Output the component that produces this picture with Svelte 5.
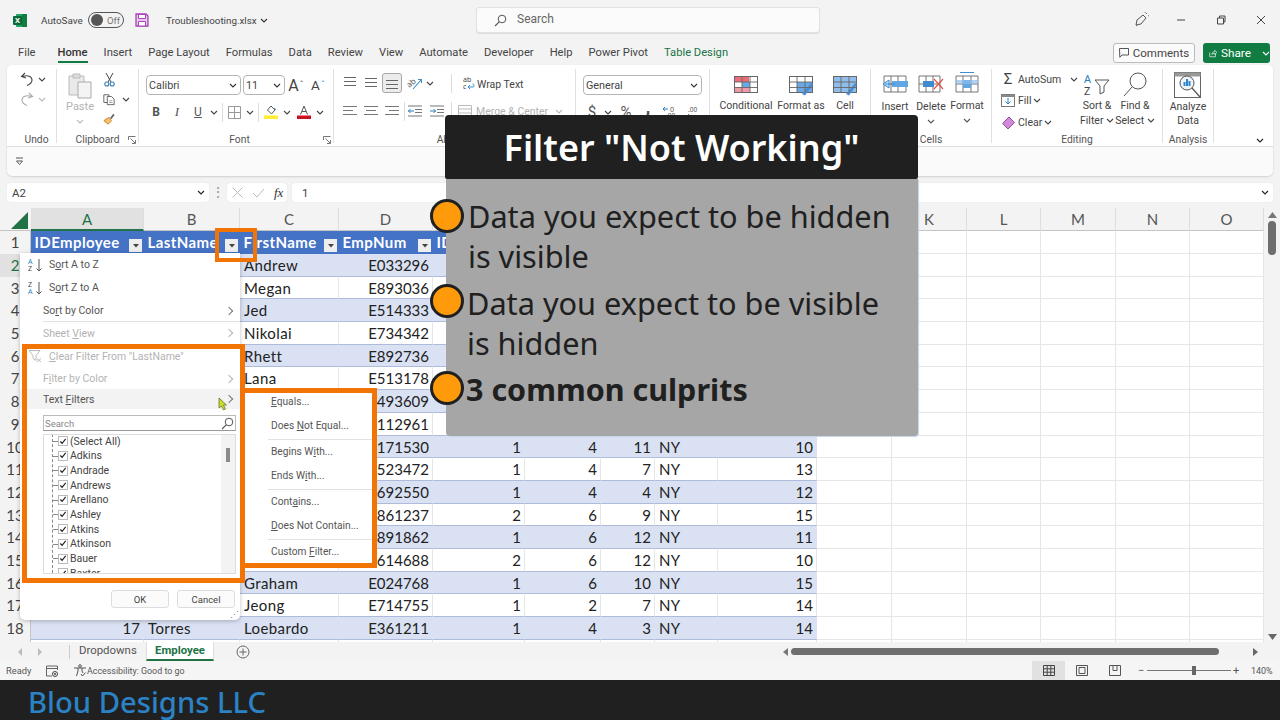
<script>
  const tabs = ['File','Home','Insert','Page Layout','Formulas','Data','Review','View','Automate','Developer','Help','Power Pivot','Table Design'];
  const cols = ['A','B','C','D','E','F','G','H','I','J','K','L','M','N','O'];
  const rows = [
    {c:'Andrew',d:'E033296'},{c:'Megan',d:'E893036'},{c:'Jed',d:'E514333'},{c:'Nikolai',d:'E734342'},
    {c:'Rhett',d:'E892736'},{c:'Lana',d:'E513178'},{c:'',d:'E493609'},{c:'',d:'E112961'},
    {c:'',d:'E171530',v:[1,4,11,10]},{c:'',d:'E523472',v:[1,4,7,13]},{c:'',d:'E692550',v:[1,4,4,12]},
    {c:'',d:'E861237',v:[2,6,9,15]},{c:'',d:'E891862',v:[1,6,12,11]},{c:'',d:'E614688',v:[2,6,12,10]},
    {c:'Graham',d:'E024768',v:[1,6,10,15]},{c:'Jeong',d:'E714755',v:[1,2,7,14]},
    {a:17,b:'Torres',c:'Loebardo',d:'E361211',v:[1,4,3,14]}
  ];
  const heads = ['IDEmployee','LastName','FirstName','EmpNum','ID'];
  const names = ['(Select All)','Adkins','Andrade','Andrews','Arellano','Ashley','Atkins','Atkinson','Bauer','Baxter'];
</script>

{#snippet chev(color = '#444')}
  <svg width="8" height="5" viewBox="0 0 8 5"><path d="M1 1l3 3 3-3" fill="none" stroke={color} stroke-width="1.1"/></svg>
{/snippet}
{#snippet launcher()}
  <svg width="8" height="8" viewBox="0 0 8 8"><path d="M.5 4V.5H7.5M2.5 2.5L7 7M4 7.5h3.5V4" fill="none" stroke="#666" stroke-width=".9"/></svg>
{/snippet}
{#snippet lines(a, b, c, top = 0)}
  <svg width="14" height="12" viewBox="0 0 14 12" style:margin-top="{top}px"><path d="M{a} 1.5H{14-a}M{b} 5.5H{14-b}M{c} 9.5H{14-c}" fill="none" stroke="#666" stroke-width="1.2"/></svg>
{/snippet}
{#snippet hlines(d)}
  <svg width="14" height="12" viewBox="0 0 14 12"><path d={d} fill="none" stroke="#777" stroke-width="1.2"/></svg>
{/snippet}
{#snippet tableIcon(extra)}
  <svg width="26" height="24" viewBox="0 0 26 24">
    <rect x="1.5" y="4.5" width="23" height="16" fill="#fff" stroke="#666"/>
    {@render extra()}
    <path d="M1.5 10h23M1.5 15.5h23M9 4.5v16M17 4.5v16" fill="none" stroke="#666" stroke-width=".9"/>
  </svg>
{/snippet}

<div class="root">
  <header class="title">
    <svg class="xl" width="15" height="15" viewBox="0 0 15 15"><rect x="3" y="1" width="11" height="13" rx="1" fill="#21a366"/><rect x="9" y="1" width="5" height="13" fill="#107c41"/><rect x="0" y="3" width="9" height="9" rx="1" fill="#0b6a38"/><text x="4.5" y="10" font-size="7.5" font-weight="700" fill="#fff" text-anchor="middle" font-family="Noto Sans">X</text></svg>
    <span class="autosave">AutoSave</span>
    <span class="toggle"><i></i><b>Off</b></span>
    <svg class="save" width="14" height="14" viewBox="0 0 14 14"><path d="M1 1h10l2 2v10H1z" fill="#e8c6ee" stroke="#a646b5" stroke-width="1.3"/><path d="M3.5 1.5h7v4h-7zM3.5 8.5h7v4.5h-7z" fill="#fff" stroke="#a646b5"/></svg>
    <span class="fname">Troubleshooting.xlsx</span>
    <span class="fchev">{@render chev('#333')}</span>
    <div class="search">
      <svg width="13" height="13" viewBox="0 0 13 13"><circle cx="8" cy="5" r="3.8" fill="none" stroke="#555"/><path d="M5.2 7.8L1 12" stroke="#555" stroke-width="1.1"/></svg>
      <span>Search</span>
    </div>
    <div class="winbtns">
      <svg class="pen" width="16" height="16" viewBox="0 0 16 16"><path d="M2 13l1-5 6-5 3 3-5 6z" fill="none" stroke="#555"/><path d="M2 14l3-2M12 2l1-1M14 4l1-.5M11 1l.3-1" stroke="#777"/></svg>
      <svg width="10" height="10" viewBox="0 0 10 10"><path d="M1 5h8" stroke="#444" stroke-width="1"/></svg>
      <svg width="10" height="10" viewBox="0 0 10 10"><path d="M1.5 3h6v6h-6zM3.5 3V1h5.5v6H7.5" fill="none" stroke="#444"/></svg>
      <svg width="10" height="10" viewBox="0 0 10 10"><path d="M1 1l8 8M9 1l-8 8" stroke="#444" stroke-width="1"/></svg>
    </div>
  </header>

  <nav class="tabs">
    {#each tabs as t}
      <span class="tab" class:on={t === 'Home'} class:green={t === 'Table Design'}>{t}</span>
    {/each}
    <div class="tabright">
      <button class="comments"><svg width="10" height="10" viewBox="0 0 10 10"><path d="M.5.500h9v6.500H3L.8 9.300z" fill="none" stroke="#444" stroke-width=".9"/></svg>Comments</button>
      <button class="share"><svg width="11" height="11" viewBox="0 0 11 11"><path d="M1 4v6h8V6M4 7c0-3 2-4 4-4V1l3 3-3 3V5C6 5 5 6 4 7z" fill="none" stroke="#fff" stroke-width=".9"/></svg>Share<span class="sc">{@render chev('#fff')}</span></button>
    </div>
  </nav>

  <section class="ribbon">
    <div class="groups">
      <div class="grp g-undo">
        <div class="body">
          <div class="ln h20">
            <span class="s w20"><svg width="14" height="14" viewBox="0 0 14 14"><path d="M5 1L1.500 4.500 6 6M2 4.500c6-2 10 0 10 3.500 0 3-2.500 4.500-5 5.500" fill="none" stroke="#444" stroke-width="1.100"/></svg></span>
            <span class="s w10">{@render chev()}</span>
          </div>
          <div class="ln h20">
            <span class="s w20"><svg width="14" height="14" viewBox="0 0 14 14"><path d="M9 1l3.500 3.500L8 6M12 4.500C6 2.500 2 4.500 2 8c0 3 2.500 4.500 5 5.500" fill="none" stroke="#aaa" stroke-width="1.100"/></svg></span>
            <span class="s w10">{@render chev('#bbb')}</span>
          </div>
        </div>
        <div class="lab">Undo</div>
      </div>

      <div class="grp g-clip">
        <div class="body row">
          <div class="paste">
            <svg width="24" height="27" viewBox="0 0 24 27"><path d="M1 4h15v19H1z" fill="#e9e9e9" stroke="#bbb"/><path d="M5 2h7v4H5z" fill="#ddd" stroke="#bbb"/><path d="M10 10h13v16H10z" fill="#f4f4f4" stroke="#aaa"/></svg>
            <span class="gray">Paste</span>
            <span class="pchev">{@render chev('#bbb')}</span>
          </div>
          <div class="clipcol">
            <span class="s w12 h20"><svg width="11" height="15" viewBox="0 0 11 15"><path d="M2 1l5 9M9 1L4 10" stroke="#444" fill="none"/><circle cx="2.800" cy="12" r="2" fill="none" stroke="#3a7fb8" stroke-width="1.100"/><circle cx="8.200" cy="12" r="2" fill="none" stroke="#3a7fb8" stroke-width="1.100"/></svg></span>
            <span class="ln"><span class="s w12 h20"><svg width="14" height="13" viewBox="0 0 14 13"><path d="M1 1h6v9H1z" fill="#fff" stroke="#555"/><path d="M5 3h5l3 3v6.500H5z" fill="#fff" stroke="#555"/><path d="M7 8h4M7 10h4" stroke="#777" stroke-width=".7"/></svg></span><span class="s w18">{@render chev()}</span></span>
            <span class="s w12 h20"><svg width="14" height="14" viewBox="0 0 14 14"><path d="M8 6l4-5 1.500 1.200L10 7z" fill="#666"/><path d="M1 9l6-4 3 4-4 4z" fill="#f6c16a" stroke="#c77a1f"/></svg></span>
          </div>
        </div>
        <div class="lab">Clipboard<span class="launch">{@render launcher()}</span></div>
      </div>

      <div class="grp g-font">
        <div class="body">
          <div class="ln mt6">
            <div class="combo c-font"><span>Calibri</span>{@render chev('#333')}</div>
            <div class="combo c-size"><span>11</span>{@render chev('#333')}</div>
            <span class="s w22 big">A<sup>ˆ</sup></span>
            <span class="s w22 mid">A<sup class="blue">ˇ</sup></span>
          </div>
          <div class="ln h20 mt7 r2">
            <span class="s w20 ic"><b>B</b></span>
            <span class="s w22 ic"><i>I</i></span>
            <span class="s w20 ic"><u>U</u></span>
            <span class="s w12">{@render chev()}</span>
            <span class="s w4"><i class="sep"></i></span>
            <span class="s w20"><svg width="13" height="13" viewBox="0 0 13 13"><path d="M.5.500h12v12H.5z M6.500.5v12M.5 6.500h12" fill="none" stroke="#999"/></svg></span>
            <span class="s w12">{@render chev()}</span>
            <span class="s w4"><i class="sep"></i></span>
            <span class="s w22"><svg width="14" height="14" viewBox="0 0 14 14"><path d="M7 1l4 4-3.500 4-4-4z" fill="#fff" stroke="#555"/><path d="M10 3.500l2 1" stroke="#3a7fb8"/><rect y="10.500" width="14" height="3.500" fill="#ffee33"/></svg></span>
            <span class="s w10">{@render chev()}</span>
            <span class="s w24"><svg width="14" height="14" viewBox="0 0 14 14"><path d="M3.500 9.500L7 1l3.500 8.500M5 6.500h4" fill="none" stroke="#555"/><rect y="10.500" width="14" height="3.500" fill="#cc1122"/></svg></span>
            <span class="s w8">{@render chev()}</span>
          </div>
        </div>
        <div class="lab">Font<span class="launch">{@render launcher()}</span></div>
      </div>

      <div class="grp g-align">
        <div class="body">
          <div class="ln h20 mt4">
            <span class="s w20">{@render lines(1,1,1,-3)}</span>
            <span class="s w22">{@render lines(1,1,1)}</span>
            <span class="s w20 selbox">{@render lines(1,1,1,3)}</span>
            <span class="s w24"><svg class="orient" width="16" height="15" viewBox="0 0 16 15"><text x="1" y="10" font-size="8" fill="#555" transform="rotate(-40 5 8)" font-family="Noto Sans">ab</text><path d="M7 13L15 4M12 3.500h3.500V7" fill="none" stroke="#3a8fc8" stroke-width="1.100"/></svg></span>
            <span class="s w8">{@render chev()}</span>
            <span class="s w18 end"><i class="sep"></i></span>
            <span class="s w16 ml8"><svg width="13" height="14" viewBox="0 0 13 14"><text x="1" y="6" font-size="7" fill="#444" font-family="Noto Sans">ab</text><text x="1" y="13" font-size="7" fill="#444" font-family="Noto Sans">c</text><path d="M6 11h5c1.500 0 1.500-3-.5-3M6 11l2-2M6 11l2 2" fill="none" stroke="#3a8fc8"/></svg></span>
            <span class="rtext wrap">Wrap Text</span>
          </div>
          <div class="ln h20 mt8">
            <span class="s w20">{@render hlines('M0 1.500H14M0 5.500H10M0 9.500H14')}</span>
            <span class="s w22">{@render hlines('M0 1.500H14M2 5.500H12M0 9.500H14')}</span>
            <span class="s w20">{@render hlines('M0 1.500H14M4 5.500H14M0 9.500H14')}</span>
            <span class="s w4"><i class="sep"></i></span>
            <span class="s w18"><svg width="14" height="12" viewBox="0 0 14 12"><path d="M0 1h14M7 4.500h7M7 7.500h7M0 11h14" stroke="#777"/><path d="M6 6H0M2.500 4L.5 6l2 2" fill="none" stroke="#2b7fc0"/></svg></span>
            <span class="s w26"><svg width="14" height="12" viewBox="0 0 14 12"><path d="M0 1h14M7 4.500h7M7 7.500h7M0 11h14" stroke="#777"/><path d="M0 6h6M3.500 4l2 2-2 2" fill="none" stroke="#2b7fc0"/></svg></span>
            <span class="s w2"><i class="sep"></i></span>
            <span class="s w14 ml6"><svg width="14" height="12" viewBox="0 0 14 12"><path d="M.5.500h13v11H.5zM.5 4h13M.5 8h13" fill="none" stroke="#bbb"/></svg></span>
            <span class="rtext gray">Merge &amp; Center</span>
            <span class="s w22">{@render chev('#bbb')}</span>
          </div>
        </div>
        <div class="lab al">Alignment</div>
      </div>

      <div class="grp g-num">
        <div class="body">
          <div class="ln mt6"><div class="combo c-gen"><span>General</span>{@render chev('#333')}</div></div>
          <div class="ln h20 mt7 numrow">
            <span class="s w18 nb">$</span><span class="s w14">{@render chev()}</span>
            <span class="s w22 nb">%</span><span class="s w22 nb comma">,</span>
            <span class="s w22"><svg width="16" height="14" viewBox="0 0 16 14"><path d="M6 4H1M3 2L1 4l2 2" fill="none" stroke="#2b7fc0"/><text x="8" y="7" font-size="7" fill="#555" font-family="Noto Sans">0</text><text x="4" y="13" font-size="6.500" fill="#555" font-family="Noto Sans">.00</text></svg></span>
            <span class="s w22"><svg width="16" height="14" viewBox="0 0 16 14"><text x="4" y="7" font-size="6.500" fill="#555" font-family="Noto Sans">.00</text><path d="M1 11h5M4 9l2 2-2 2" fill="none" stroke="#2b7fc0"/></svg></span>
          </div>
        </div>
        <div class="lab">Number</div>
      </div>

      <div class="grp g-style">
        <div class="body row">
          <div class="big-btn w72">
            {#snippet cf()}<rect x="2" y="5" width="14" height="5" fill="#ef6b78"/><rect x="9" y="10" width="8" height="5" fill="#6aa8e6"/><rect x="2" y="15" width="15" height="5" fill="#ef9aa4"/>{/snippet}
            {@render tableIcon(cf)}
            <span>Conditional</span>
          </div>
          <div class="big-btn w38">
            {#snippet ft()}<rect x="9" y="10" width="15" height="10" fill="#6aa8e6"/><path d="M14 22l9-11 2 1.500-8 11z" fill="#4a8fd6"/>{/snippet}
            {@render tableIcon(ft)}
            <span>Format as</span>
          </div>
          <div class="big-btn w50">
            {#snippet ce()}<rect x="2" y="5" width="22" height="15" fill="#8fbdec"/><path d="M14 22l9-11 2 1.500-8 11z" fill="#4a8fd6"/>{/snippet}
            {@render tableIcon(ce)}
            <span>Cell</span>
          </div>
        </div>
        <div class="lab">Styles</div>
      </div>

      <div class="grp g-cells">
        <div class="body row">
          <div class="big-btn w48 cellbtn">
            <svg width="28" height="24" viewBox="0 0 28 24"><path d="M3 4h22v16H3zM3 12h22M10 4v16M17 4v16" fill="#fff" stroke="#666" stroke-width=".9"/><rect x="11" y="9" width="16" height="6" fill="#62a6e4"/><path d="M14 12H4M8 8l-6 4 6 4z" fill="#bfe0f8" stroke="#3f8bd0"/></svg>
            <span>Insert</span>
          </div>
          <div class="big-btn w24 cellbtn">
            <svg width="26" height="24" viewBox="0 0 26 24"><path d="M1 4h21v16H1zM1 12h21M8 4v16M15 4v16" fill="#fff" stroke="#666" stroke-width=".9"/><rect x="5" y="9" width="11" height="6" fill="#3f8bd0"/><path d="M16 7l9 10M25 7l-9 10" stroke="#e2574c" stroke-width="1.200"/></svg>
            <span>Delete</span>
            <span class="pchev">{@render chev('#555')}</span>
          </div>
          <div class="big-btn w48 fmtbtn">
            <svg width="26" height="26" viewBox="0 0 26 26"><path d="M6 2.500h14" stroke="#3f8bd0"/><path d="M2 6h22v16H2zM2 14h22M9 6v16M17 6v16" fill="#fff" stroke="#666" stroke-width=".9"/><rect x="9" y="10" width="8" height="8" fill="#62a6e4"/><rect x="2" y="10" width="22" height="4" fill="#8fbdec" opacity=".7"/></svg>
            <span>Format</span>
            <span class="pchev">{@render chev('#555')}</span>
          </div>
        </div>
        <div class="lab">Cells</div>
      </div>

      <div class="grp g-edit">
        <div class="body row">
          <div class="editcol">
            <div class="ln h20"><span class="s w16 sigma">Σ</span><span class="etext">AutoSum</span><span class="s autoch">{@render chev()}</span></div>
            <div class="ln h20 mt1"><span class="s w16"><svg width="14" height="13" viewBox="0 0 14 13"><rect x=".5" y=".5" width="13" height="12" fill="#fff" stroke="#777"/><rect x=".5" y=".5" width="13" height="2.500" fill="#888"/><path d="M7 4v6M4.500 7.500L7 10l2.500-2.500" fill="none" stroke="#2b7fc0"/></svg></span><span class="etext">Fill</span><span class="s w10 ec">{@render chev()}</span></div>
            <div class="ln h20 mt2"><span class="s w16"><svg width="13" height="13" viewBox="0 0 13 13"><path d="M.5 7.500L7 1l5.500 5.500L6 13z" fill="#d08bd6" stroke="#9c4ca6"/></svg></span><span class="etext">Clear</span><span class="s w10 ec">{@render chev()}</span></div>
          </div>
          <div class="big-btn w26 sort">
            <svg width="27" height="26" viewBox="0 0 27 26"><text x="0" y="11" font-size="11" fill="#2b7fc0" font-family="Noto Sans">A</text><text x="0" y="23" font-size="11" fill="#444" font-family="Noto Sans">Z</text><path d="M11 8h14l-5 6v6l-4 2v-8z" fill="#fff" stroke="#555"/></svg>
            <span>Sort &amp;</span><span>Filter <em>{@render chev()}</em></span>
          </div>
          <div class="big-btn w50 sort">
            <svg width="26" height="26" viewBox="0 0 26 26"><circle cx="16" cy="9" r="8" fill="#fff" stroke="#555"/><path d="M10 15L2 24" stroke="#555"/></svg>
            <span>Find &amp;</span><span>Select <em>{@render chev()}</em></span>
          </div>
        </div>
        <div class="lab">Editing</div>
      </div>

      <div class="grp g-an">
        <div class="body">
          <div class="big-btn sort">
            <svg width="28" height="27" viewBox="0 0 28 27"><rect x=".5" y=".5" width="26" height="25" fill="#fff" stroke="#666"/><rect x=".5" y=".5" width="26" height="4" fill="#999"/><circle cx="13" cy="11" r="7" fill="#eef4fa" stroke="#555"/><path d="M9.500 14V10h2v4zM12 14V7h2v7zM14.500 14v-5h2v5z" fill="#2f84cf"/><path d="M18 16l8 9" stroke="#555" stroke-width="1.200"/></svg>
            <span>Analyze</span><span>Data</span>
          </div>
        </div>
        <div class="lab">Analysis</div>
      </div>
      <div class="collapse">{@render chev('#222')}</div>
    </div>
    <div class="qat">
      <svg width="9" height="9" viewBox="0 0 9 9"><path d="M1 1h7M1.500 4h6l-3 3.500z" fill="none" stroke="#555"/></svg>
    </div>
  </section>

  <div class="fbar">
    <div class="namebox"><span>A2</span><span class="nbch">{@render chev('#222')}</span></div>
    <span class="dots">⋮</span>
    <div class="fxbtn">
      <svg width="11" height="11" viewBox="0 0 11 11"><path d="M.5.500l10 10M10.500.500l-10 10" stroke="#bbb"/></svg>
      <svg width="13" height="10" viewBox="0 0 13 10"><path d="M1 5l4 4 7-8" fill="none" stroke="#bbb"/></svg>
      <i>fx</i>
    </div>
    <div class="finput"><span>1</span><span class="finch">{@render chev('#222')}</span></div>
  </div>

  <div class="sheet">
    <div class="gridwrap">
      <div class="colhead">
        <div class="corner"><svg width="18" height="18" viewBox="0 0 18 18"><path d="M17 1v17H0z" fill="#217346"/></svg></div>
        {#each cols as c}<div class="ch" class:sel={c === 'A'}>{c}</div>{/each}
      </div>
      <div class="r tall">
        <div class="rn">1</div>
        {#each heads as h}
          <div class="c hd">{h}<span class="fb"><svg width="6" height="4" viewBox="0 0 6 4"><path d="M0 0h6L3 3.500z" fill="#444"/></svg></span></div>
        {/each}
        {#each [0,1,2,3] as i}<div class="c hd"></div>{/each}
        {#each [0,1,2,3,4,5] as i}<div class="c"></div>{/each}
      </div>
      {#each rows as row, i}
        <div class="r" class:band={i % 2 === 0}>
          <div class="rn" class:rsel={i === 0}>{i + 2}</div>
          <div class="c t num">{row.a ?? ''}</div>
          <div class="c t txt">{row.b ?? ''}</div>
          <div class="c t txt">{row.c}</div>
          <div class="c t num">{row.d}</div>
          <div class="c t num">{row.v ? row.v[0] : ''}</div>
          <div class="c t num">{row.v ? row.v[1] : ''}</div>
          <div class="c t num">{row.v ? row.v[2] : ''}</div>
          <div class="c t txt">{row.v ? 'NY' : ''}</div>
          <div class="c t num">{row.v ? row.v[3] : ''}</div>
          {#each [0,1,2,3,4,5] as j}<div class="c"></div>{/each}
        </div>
      {/each}
      <div class="r"><div class="rn"></div>{#each cols as c}<div class="c"></div>{/each}</div>
    </div>
    <div class="vscroll">
      <svg width="9" height="6" viewBox="0 0 9 6"><path d="M4.500 0L9 6H0z" fill="#777"/></svg>
      <i></i>
      <svg class="dn" width="9" height="6" viewBox="0 0 9 6"><path d="M4.500 6L9 0H0z" fill="#666"/></svg>
    </div>
  </div>

  <div class="sheettabs">
    <span class="arrows">
      <svg width="5" height="8" viewBox="0 0 5 8"><path d="M4 0L0 4l4 4z" fill="#bbb"/></svg>
      <svg width="5" height="8" viewBox="0 0 5 8"><path d="M1 0l4 4-4 4z" fill="#bbb"/></svg>
    </span>
    <i class="tsep"></i>
    <span class="st">Dropdowns</span>
    <span class="st active">Employee</span>
    <svg class="plus" width="14" height="14" viewBox="0 0 14 14"><circle cx="7" cy="7" r="6" fill="none" stroke="#666"/><path d="M7 3.500v7M3.500 7h7" stroke="#666"/></svg>
    <div class="hscroll">
      <svg width="5" height="8" viewBox="0 0 5 8"><path d="M5 0L0 4l5 4z" fill="#777"/></svg>
      <i></i>
      <svg class="hr" width="5" height="8" viewBox="0 0 5 8"><path d="M0 0l5 4-5 4z" fill="#666"/></svg>
    </div>
  </div>

  <footer class="status">
    <span class="ready">Ready</span>
    <svg class="mac" width="12" height="12" viewBox="0 0 12 12"><path d="M.5 1h11v4M.5 1v10H6M.5 3.500H11" fill="none" stroke="#666"/><circle cx="9" cy="9" r="2.500" fill="none" stroke="#444"/><circle cx="9" cy="9" r="1" fill="#444"/></svg>
    <svg class="acc" width="14" height="13" viewBox="0 0 14 13"><circle cx="7" cy="2" r="1.300" fill="none" stroke="#555"/><path d="M1 4h12M5 4v3l-1.500 5M9 4v3l1 2" fill="none" stroke="#555"/><path d="M8 10l1.500 2 3-3.500" fill="none" stroke="#555"/></svg>
    <span class="acct">Accessibility: Good to go</span>
    <div class="stright">
      <span class="vb on"><svg width="12" height="11" viewBox="0 0 12 11"><path d="M.5.500h11v10H.5zM.5 3.800h11M.5 7.200h11M4.200.5v10M7.800.5v10" fill="none" stroke="#444"/></svg></span>
      <span class="vb"><svg width="12" height="11" viewBox="0 0 12 11"><path d="M.5.500h11v10H.5z" fill="none" stroke="#555"/><path d="M3 2.500h6v6H3z" fill="none" stroke="#555"/></svg></span>
      <span class="vb"><svg width="12" height="11" viewBox="0 0 12 11"><path d="M.5.500h11v10H.5zM4 .5v5h4v-5" fill="none" stroke="#555"/></svg></span>
      <span class="zm">−</span>
      <span class="slider"><i></i></span>
      <span class="zp">+</span>
      <span class="pct">140%</span>
    </div>
  </footer>

  <div class="brand"><span>Blou Designs LLC</span></div>

  <!-- overlays -->
  <div class="menu">
    <div class="mi h23"><span class="sorti"><svg width="16" height="14" viewBox="0 0 16 14"><text x="0" y="6" font-size="7" fill="#2b7fc0" font-family="Noto Sans">A</text><text x="0" y="13" font-size="7" fill="#444" font-family="Noto Sans">Z</text><path d="M11 1v12M8.500 10.500L11 13l2.500-2.500" fill="none" stroke="#555"/></svg></span><span class="lbl ic1">S<u>o</u>rt A to Z</span></div>
    <div class="mi h23"><span class="sorti"><svg width="16" height="14" viewBox="0 0 16 14"><text x="0" y="6" font-size="7" fill="#444" font-family="Noto Sans">Z</text><text x="0" y="13" font-size="7" fill="#2b7fc0" font-family="Noto Sans">A</text><path d="M11 1v12M8.500 10.500L11 13l2.500-2.500" fill="none" stroke="#555"/></svg></span><span class="lbl ic1">S<u>o</u>rt Z to A</span></div>
    <div class="mi h23 ul"><span class="lbl">So<u>r</u>t by Color</span><span class="ar"></span></div>
    <div class="mi h22 gr"><span class="lbl">Sheet <u>V</u>iew</span><span class="ar"></span></div>
    <div class="mi h24 gr"><span class="sorti"><svg width="14" height="13" viewBox="0 0 14 13"><path d="M1 1h11L8 6v5L5 9V6z" fill="none" stroke="#bbb"/><path d="M9 9l4 3.500M13 9l-4 3.500" stroke="#bbb"/></svg></span><span class="lbl ic1"><u>C</u>lear Filter From "LastName"</span></div>
    <div class="mi h21 gr"><span class="lbl">F<u>i</u>lter by Color</span><span class="ar"></span></div>
    <div class="mi h20 hov"><span class="lbl">Text <u>F</u>ilters</span><span class="ar"></span></div>
    <div class="msearch"><span>Search</span><svg width="13" height="13" viewBox="0 0 13 13"><circle cx="8" cy="5" r="3.800" fill="none" stroke="#555"/><path d="M5.200 7.800L1 12" stroke="#555" stroke-width="1.100"/></svg></div>
    <div class="mlist">
      <div class="tree">
        {#each names as n}
          <div class="chk"><span class="box"><svg width="9" height="9" viewBox="0 0 9 9"><path d="M1.500 4.500l2 2 4-5" fill="none" stroke="#222" stroke-width="1.300"/></svg></span>{n}</div>
        {/each}
      </div>
      <div class="mscroll"><i></i></div>
    </div>
    <div class="mbtns"><button>OK</button><button>Cancel</button></div>
    <div class="grip">⋰</div>
  </div>

  <div class="submenu">
    <div class="si"><u>E</u>quals...</div>
    <div class="si ul">Does <u>N</u>ot Equal...</div>
    <div class="si">Begins W<u>i</u>th...</div>
    <div class="si ul">Ends W<u>i</u>th...</div>
    <div class="si">Cont<u>a</u>ins...</div>
    <div class="si ul"><u>D</u>oes Not Contain...</div>
    <div class="si">Custom <u>F</u>ilter...</div>
  </div>

  <div class="hl hl-btn"></div>
  <div class="hl hl-menu"></div>
  <div class="hl hl-sub"></div>
  <svg class="cursor" width="9" height="14" viewBox="0 0 9 14"><path d="M1 1v10l2.500-2 2 4 2-1-2-4H8.500z" fill="#c7df2a" stroke="#56641a" stroke-width=".7"/></svg>

  <aside class="panel">
    <h1>Filter "Not Working"</h1>
    <div class="pbody">
      <div class="pi"><i class="dot"></i><p>Data you expect to be hidden<br/>is visible</p></div>
      <div class="pi"><i class="dot"></i><p>Data you expect to be visible<br/>is hidden</p></div>
      <div class="pi"><i class="dot"></i><p class="bold">3 common culprits</p></div>
    </div>
  </aside>
</div>

<style>
  :global(body) { margin: 0; background: #f3f3f3; }
  .root { position: relative; width: 1280px; height: 720px; overflow: hidden; background: #f3f3f3; color: #444; font-family: "Roboto", "Noto Sans", sans-serif; font-size: 11px; display: flex; flex-direction: column; }
  button { font-family: inherit; }

  .title { height: 40px; display: flex; align-items: center; flex: none; }
  .xl { margin-left: 13px; flex: none; }
  .autosave { margin-left: 13px; font-size: 9.900px; color: #444; width: 47px; flex: none; white-space: nowrap; }
  .toggle { width: 36px; height: 16px; box-sizing: border-box; border: 1px solid #555; border-radius: 9px; display: flex; align-items: center; padding-left: 2px; flex: none; }
  .toggle i { width: 12px; height: 12px; background: #555; border-radius: 50%; flex: none; }
  .toggle b { font-weight: 400; font-size: 9.500px; margin-left: 4px; color: #777; }
  .save { margin-left: 11px; flex: none; }
  .fname { margin-left: 17px; font-size: 9.800px; width: 94px; white-space: nowrap; flex: none; }
  .fchev { display: flex; flex: none; }
  .search { margin-left: 208px; width: 344px; height: 26px; box-sizing: border-box; background: #fbfbfb; border: 1px solid #e2e2e2; border-radius: 3px; box-shadow: 0 1px 1px #ddd; display: flex; align-items: center; padding-left: 17px; gap: 10px; font-size: 12px; color: #666; flex: none; }
  .search span { margin-top: -2px; }
  .winbtns { margin-left: 314px; display: flex; align-items: center; gap: 30px; flex: none; }
  .pen { margin-right: -4px; }

  .tabs { height: 25px; flex: none; display: flex; align-items: center; padding-left: 18px; gap: 16px; font-size: 11.200px; position: relative; }
  .tab { height: 25px; line-height: 25px; white-space: nowrap; position: relative; }
  .tab.on { font-weight: 500; color: #333; margin-left: 6px; }
  .tab.on::after { content: ''; position: absolute; left: 0; right: 0; bottom: 2px; height: 2px; background: #107c41; }
  .tab.green { color: #217346; }
  .tabright { position: absolute; left: 1113px; top: 3px; display: flex; gap: 8px; }
  .comments { width: 82px; height: 20px; background: #fbfbfb; border: 1px solid #bbb; border-radius: 3px; display: flex; align-items: center; justify-content: center; gap: 4px; font-size: 11.500px; color: #444; padding: 0; }
  .share { width: 67px; height: 20px; background: #107c41; border: 0; border-radius: 3px; color: #fff; display: flex; align-items: center; justify-content: flex-start; padding: 0 0 0 6px; gap: 4px; font-size: 11.800px; }
  .sc { margin-left: 7px; display: flex; }

  .ribbon { flex: none; margin: 0 7px; height: 111px; background: #fdfdfd; border-radius: 6px; box-shadow: 0 1px 2px #cfcfcf; display: flex; flex-direction: column; }
  .groups { height: 82px; border-bottom: 1px solid #dedede; box-sizing: border-box; display: flex; padding-top: 4px; position: relative; background: #fff; border-radius: 6px 6px 0 0; }
  .qat { flex: 1; background: #fafafa; display: flex; align-items: center; padding-left: 8px; border-radius: 0 0 6px 6px; }
  .grp { height: 74px; border-right: 1px solid #e1e1e1; box-sizing: border-box; display: flex; flex-direction: column; position: relative; flex: none; }
  .body { height: 64px; flex: none; }
  .body.row { display: flex; }
  .lab { height: 14px; line-height: 14px; text-align: center; font-size: 10.300px; color: #555; margin-top: 0; position: relative; white-space: nowrap; flex: none; }
  .launch { position: absolute; right: 2px; top: 3px; display: flex; }

  .ln { display: flex; align-items: center; }
  .h20 { height: 20px; }
  .mt1 { margin-top: 1px; } .mt2 { margin-top: 2px; } .mt4 { margin-top: 4px; } .mt6 { margin-top: 6px; } .mt7 { margin-top: 7px; } .mt8 { margin-top: 8px; }
  .ml6 { margin-left: 6px; } .ml8 { margin-left: 8px; }
  .s { display: flex; align-items: center; justify-content: center; flex: none; }
  .w2 { width: 2px; } .w4 { width: 4px; } .w8 { width: 8px; } .w10 { width: 10px; } .w12 { width: 12px; } .w14 { width: 14px; } .w16 { width: 16px; } .w18 { width: 18px; } .w20 { width: 20px; } .w22 { width: 22px; } .w24 { width: 24px; } .w26 { width: 26px; } .w38 { width: 38px; } .w48 { width: 48px; } .w50 { width: 50px; } .w72 { width: 72px; }
  .sep { display: block; width: 1px; height: 19px; background: #ddd; flex: none; }
  .end { justify-content: flex-end; }
  .gray { color: #b3b3b3; }

  .g-undo { width: 50px; padding-left: 10px; }
  .g-clip { width: 82px; }
  .paste { width: 46px; display: flex; flex-direction: column; align-items: center; padding-top: 3px; font-size: 11px; line-height: 15px; box-sizing: border-box; }
  .pchev { display: flex; justify-content: center; margin-top: 5px; }
  .clipcol { display: flex; flex-direction: column; }
  .clipcol .w18 { margin-left: 4px; width: 14px; }
  .g-font { width: 195px; padding-left: 7px; }
  .combo { height: 20px; box-sizing: border-box; border: 1px solid #b5b5b5; border-radius: 4px; background: #fff; display: flex; align-items: center; justify-content: space-between; padding: 0 3px 0 2px; font-size: 10.800px; color: #444; flex: none; }
  .c-font { width: 95px; }
  .c-size { width: 42px; margin-left: 2px; }
  .big { font-size: 16px; }
  .mid { font-size: 13.500px; }
  .big sup, .mid sup { font-size: 9px; line-height: 0; margin-left: 1px; }
  .blue { color: #2b7fc0; }
  .ic { font-size: 12px; color: #555; }
  .ic i { font-family: "Liberation Serif", serif; font-size: 13px; }
  .g-align { width: 242px; padding-left: 6px; }
  .selbox { height: 20px; box-sizing: border-box; background: #ececec; border: 1px solid #a8a8a8; border-radius: 3px; }
  .rtext { font-size: 10.500px; white-space: nowrap; margin-left: 1px; }
  .wrap { margin-top: 3px; }
  .rtext.gray { width: 72px; margin-left: 4px; }
  .orient { overflow: visible; }
  .al { padding-left: 5px; }
  .g-num { width: 134px; padding-left: 7px; }
  .c-gen { width: 119px; }
  .nb { font-size: 15px; color: #555; }
  .comma { font-weight: 700; font-size: 20px; margin-top: -12px; }
  .g-style { width: 161px; }
  .big-btn { display: flex; flex-direction: column; align-items: center; flex: none; font-size: 10.500px; line-height: 14px; white-space: nowrap; padding-top: 3px; box-sizing: border-box; }
  .big-btn svg { margin-bottom: 3px; }
  .big-btn span { line-height: 14px; }
  .g-cells { width: 121px; }
  .cellbtn svg { margin-bottom: 4px; }
  .fmtbtn { padding-top: 1px; }
  .g-edit { width: 171px; }
  .editcol { width: 92px; padding-left: 8px; box-sizing: border-box; display: flex; flex-direction: column; }
  .sigma { font-size: 15px; color: #444; }
  .etext { font-size: 10.500px; margin-left: 2px; white-space: nowrap; }
  .autoch { margin-left: 9px; }
  .ec { margin-left: 1px; }
  .sort { padding-top: 3px; }
  .sort svg { margin-bottom: 1px; }
  .sort em { font-style: normal; display: inline-block; vertical-align: 1px; }
  .sort em :global(svg) { display: inline-block; margin: 0; }
  .g-an { width: 51px; }
  .collapse { position: absolute; left: 1249px; top: 68px; }

  .fbar { flex: none; margin-top: 7px; height: 19px; display: flex; padding: 0 7px; align-items: stretch; font-size: 11.500px; }
  .namebox { width: 202px; background: #fff; border-radius: 3px; box-shadow: 0 0 1px #ccc; display: flex; align-items: center; justify-content: space-between; padding: 0 4px 0 5px; box-sizing: border-box; }
  .nbch { display: flex; }
  .dots { width: 18px; text-align: center; line-height: 19px; color: #888; }
  .fxbtn { width: 60px; background: #fff; border-radius: 3px; box-shadow: 0 0 1px #ccc; display: flex; align-items: center; gap: 9px; padding-left: 5px; box-sizing: border-box; font-family: "Liberation Serif", serif; font-size: 13px; color: #333; }
  .finput { flex: 1; margin-left: 5px; background: #fff; border-radius: 3px; box-shadow: 0 0 1px #ccc; display: flex; align-items: center; justify-content: space-between; padding: 0 4px 0 10px; }
  .finch { display: flex; }

  .sheet { flex: none; margin-top: 6px; height: 434px; display: flex; overflow: hidden; }
  .gridwrap { width: 1264px; flex: none; }
  .colhead, .r { display: grid; grid-template-columns: 31px 113px 96px 99px 94px 92px 76px 54px 63px 99px 75px 75px 74px 75px 74px 74px; }
  .colhead { height: 23px; border-bottom: 1px solid #c4c4c4; box-sizing: border-box; }
  .corner { display: flex; align-items: flex-end; justify-content: flex-end; padding: 0 2px 2px 0; }
  .ch { font-family: "Lato", sans-serif; font-size: 15px; line-height: 22px; text-align: center; color: #555; border-right: 1px solid #ddd; box-sizing: border-box; }
  .ch.sel { background: #e1e1e1; color: #217346; border-bottom: 2px solid #217346; height: 23px; }
  .r { height: 22.690px; }
  .r.tall { height: 23px; }
  .rn { font-family: "Lato", sans-serif; font-size: 15px; text-align: center; line-height: 22px; color: #444; border-right: 1px solid #c4c4c4; box-sizing: border-box; background: #f3f3f3; }
  .rn.rsel { background: #e1e1e1; color: #217346; }
  .c { background: #fff; border-right: 1px solid #e6e6e6; border-bottom: 1px solid #e6e6e6; box-sizing: border-box; font-family: "Lato", sans-serif; font-size: 15px; line-height: 22px; color: #222; padding: 0 3px 0 4px; white-space: nowrap; overflow: hidden; position: relative; min-width: 0; }
  .txt { letter-spacing: .4px; }
  .num { text-align: right; }
  .hd { background: #4472c4; border: 0; color: #fff; font-weight: 700; line-height: 22px; letter-spacing: .4px; padding-left: 3.500px; }
  .fb { position: absolute; right: 2px; top: 8px; width: 13px; height: 13px; background: #eee; display: flex; align-items: center; justify-content: center; }
  .band .c { background: #d9e1f2; border-right-color: transparent; border-bottom-color: #aebcdc; }
  .r:not(.band) .c.t { border-bottom-color: #aebcdc; }
  .band .c:nth-child(n+11), .r:not(.band) .c:nth-child(n+11) { background: #fff; border-right-color: #e6e6e6; border-bottom-color: #e6e6e6; }
  .vscroll { flex: 1; display: flex; flex-direction: column; align-items: center; padding-top: 4px; }
  .vscroll i { width: 8px; height: 34px; background: #6e6e6e; border-radius: 4px; margin-top: 3px; }
  .dn { margin-top: auto; margin-bottom: 2px; }

  .sheettabs { flex: none; height: 19px; display: flex; align-items: stretch; font-size: 11.400px; }
  .arrows { width: 69px; display: flex; align-items: center; gap: 14px; padding-left: 18px; box-sizing: border-box; }
  .tsep { width: 1px; height: 14px; background: #ccc; align-self: center; }
  .st { line-height: 17px; margin-left: 9px; color: #555; white-space: nowrap; width: 58px; }
  .active { margin-left: 9px; width: 68px; box-sizing: border-box; text-align: center; background: #fff; color: #217346; font-weight: 700; border-bottom: 2px solid #217346; border-left: 1px solid #ddd; border-right: 1px solid #ddd; }
  .plus { align-self: center; margin-left: 22px; }
  .hscroll { margin-left: 533px; width: 478px; display: flex; align-items: center; }
  .hscroll i { width: 428px; height: 7px; border-radius: 4px; background: #6e6e6e; margin-left: 3px; }
  .hr { margin-left: 34px; }

  .status { flex: none; height: 19px; display: flex; align-items: center; padding-left: 6px; font-size: 8.900px; color: #555; background: #f5f5f5; }
  .ready { width: 25px; font-size: 9.300px; }
  .mac { margin-left: 15px; flex: none; }
  .acc { margin-left: 15px; flex: none; }
  .acct { margin-left: 0; }
  .stright { position: absolute; left: 1032px; top: 661px; height: 19px; display: flex; align-items: center; }
  .vb { width: 33.300px; height: 19px; display: flex; align-items: center; justify-content: center; flex: none; }
  .vb.on { background: #e1e1e1; }
  .zm { margin-left: 6px; width: 8px; font-size: 11px; flex: none; }
  .slider { width: 84px; height: 1px; background: #777; position: relative; margin-left: 1px; flex: none; }
  .slider i { position: absolute; left: 45px; top: -4px; width: 4px; height: 9px; background: #666; }
  .zp { margin-left: 2px; width: 9px; font-size: 11px; flex: none; }
  .pct { margin-left: 9px; font-size: 9px; flex: none; white-space: nowrap; }

  .brand { flex: 1; background: #202020; box-sizing: border-box; padding: 5px 0 0 28px; color: #2b82c5; font-family: "Noto Sans", sans-serif; font-size: 29.200px; font-weight: 500; line-height: 35px; }

  .menu { position: absolute; left: 20px; top: 253px; width: 220px; height: 367px; background: #fff; border-radius: 0 0 5px 5px; box-shadow: 0 1px 4px rgba(0,0,0,.25); font-size: 10.500px; color: #555; }
  .mi { display: flex; align-items: center; position: relative; padding-left: 23px; box-sizing: border-box; }
  .h21 { height: 21px; } .h22 { height: 22px; } .h23 { height: 23px; } .h24 { height: 24px; }
  .ul::after { content: ''; position: absolute; left: 23px; right: 0; bottom: 0; height: 1px; background: #e2e2e2; }
  .mi.gr { color: #b3b3b3; }
  .mi.gr .ar { border-color: #b3b3b3; }
  .hov { background: #f3f3f3; }
  .ar { position: absolute; right: 8px; top: 50%; width: 5px; height: 5px; border-top: 1px solid #777; border-right: 1px solid #777; transform: translateY(-50%) rotate(45deg); }
  .sorti { position: absolute; left: 8px; top: 50%; transform: translateY(-50%); display: flex; }
  .ic1 { margin-left: 6px; }
  .msearch { margin: 6px 4px 0 23px; height: 16px; box-sizing: border-box; border: 1px solid #bbb; border-bottom-color: #999; display: flex; align-items: center; justify-content: space-between; padding: 0 1px; color: #888; font-size: 9.500px; }
  .mlist { margin: 3px 4px 0 23px; height: 140px; box-sizing: border-box; border: 1px solid #ddd; display: flex; overflow: hidden; }
  .tree { flex: 1; margin: -1px 0 0 8px; border-left: 1px dashed #888; font-size: 10.500px; color: #444; }
  .chk { height: 14.670px; display: flex; align-items: center; position: relative; padding-left: 5px; white-space: nowrap; }
  .chk::before { content: ''; position: absolute; left: 0; top: 7px; width: 5px; border-top: 1px dashed #888; }
  .box { width: 10px; height: 10px; box-sizing: border-box; border: 1px solid #bbb; background: #fff; display: flex; align-items: center; justify-content: center; margin-right: 2px; flex: none; }
  .mscroll { width: 14px; background: #f3f3f3; display: flex; justify-content: center; padding-top: 13px; box-sizing: border-box; }
  .mscroll i { width: 4px; height: 14px; background: #8a8a8a; }
  .mbtns { display: flex; gap: 8px; margin: 16px 5px 0 0; justify-content: flex-end; }
  .mbtns button { width: 58px; height: 18px; border: 1px solid #ddd; border-radius: 3px; background: #fbfbfb; font-size: 9.500px; color: #444; padding: 0; }
  .grip { position: absolute; right: 1px; bottom: 0; font-size: 9px; color: #777; line-height: 10px; }

  .submenu { position: absolute; left: 245px; top: 388px; width: 132px; height: 180px; background: #fff; box-sizing: border-box; padding: 2px 0 0 26px; font-size: 10.200px; color: #555; }
  .si { height: 25px; line-height: 24px; white-space: nowrap; position: relative; box-sizing: border-box; }
  .si.ul::after { left: -3px; right: 5px; bottom: 0; content: ''; position: absolute; height: 1px; background: #e2e2e2; }
  .si:nth-child(1) { height: 24px; } .si:nth-child(3) { height: 24px; } .si:nth-child(5) { height: 24px; }
  .si:nth-child(2), .si:nth-child(4), .si:nth-child(6) { height: 26px; }

  .hl { position: absolute; border: 5px solid #f27405; box-sizing: border-box; pointer-events: none; }
  .hl-btn { left: 215px; top: 228px; width: 42px; height: 34px; border-width: 4px; }
  .hl-menu { left: 22px; top: 344px; width: 223px; height: 239px; }
  .hl-sub { left: 240px; top: 388px; width: 137px; height: 180px; border-left-width: 0; }
  .cursor { position: absolute; left: 218px; top: 397px; }

  .panel { position: absolute; left: 445px; top: 115px; width: 473px; height: 321px; display: flex; flex-direction: column; font-family: "Noto Sans", sans-serif; }
  .panel h1 { margin: 0; height: 64px; background: #202020; border-radius: 4px 4px 2px 2px; color: #fff; text-align: center; font-size: 36px; font-weight: 600; line-height: 66px; flex: none; }
  .pbody { flex: 1; margin-left: 1px; background: #a6a6a6; border-radius: 0 0 4px 4px; box-shadow: 1px 1px 1px #c3d6e8; padding-top: 17px; }
  .pi { display: flex; margin-left: -16px; align-items: flex-start; margin-bottom: 6.500px; }
  .pi p { margin: 0; font-size: 30.700px; line-height: 40px; color: #202020; margin-left: 4px; }
  .pi:nth-child(2) p { margin-left: 3px; }
  .pi p.bold { font-weight: 700; margin-left: 2px; font-size: 30.500px; }
  .dot { width: 34px; height: 34px; box-sizing: border-box; border-radius: 50%; background: #ff9a0a; border: 3px solid #202020; flex: none; margin-top: 3px; }
  .pi:not(:first-child) .dot { margin-top: 1.500px; }
</style>
